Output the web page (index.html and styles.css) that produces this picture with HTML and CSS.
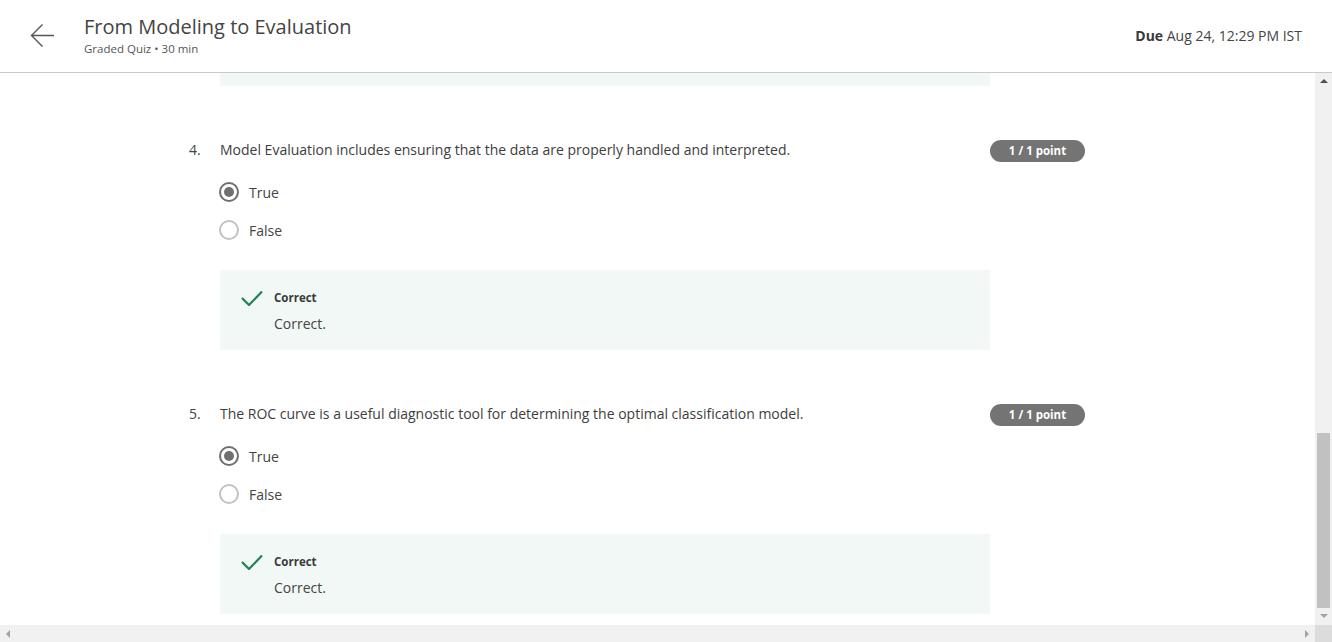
FILE: index.html
```html
<!DOCTYPE html>
<html lang="en">
<head>
<meta charset="utf-8">
<title>From Modeling to Evaluation</title>
<link rel="stylesheet" href="styles.css">
</head>
<body>
<header class="topbar">
  <div class="back">
    <svg width="26" height="26" viewBox="0 0 26 26"><path d="M25 12.5H2.5M13.5 1.5L2.5 12.5L13.5 23.5" fill="none" stroke="#555" stroke-width="1.4"/></svg>
  </div>
  <div class="titles">
    <div class="title">From Modeling to Evaluation</div>
    <div class="subtitle">Graded Quiz • 30 min</div>
  </div>
  <div class="due"><b>Due</b> Aug 24, 12:29 PM IST</div>
</header>
<div class="viewport">
  <main class="content">
    <div class="quiz">
      <div class="feedback feedback-tail"></div>

      <section class="question">
        <div class="qrow">
          <span class="qnum">4.</span>
          <span class="qtext">Model Evaluation includes ensuring that the data are properly handled and interpreted.</span>
          <span class="badge">1 / 1 point</span>
        </div>
        <div class="options">
          <div class="option"><span class="radio checked"></span><span>True</span></div>
          <div class="option"><span class="radio"></span><span>False</span></div>
        </div>
        <div class="feedback">
          <svg class="check" width="22" height="16" viewBox="0 0 22 16"><path d="M1 8L8 15L21 1.5" fill="none" stroke="#1f8354" stroke-width="2.2"/></svg>
          <div class="fbody">
            <div class="fhead">Correct</div>
            <div class="ftext">Correct.</div>
          </div>
        </div>
      </section>

      <section class="question">
        <div class="qrow">
          <span class="qnum">5.</span>
          <span class="qtext">The ROC curve is a useful diagnostic tool for determining the optimal classification model.</span>
          <span class="badge">1 / 1 point</span>
        </div>
        <div class="options">
          <div class="option"><span class="radio checked"></span><span>True</span></div>
          <div class="option"><span class="radio"></span><span>False</span></div>
        </div>
        <div class="feedback">
          <svg class="check" width="22" height="16" viewBox="0 0 22 16"><path d="M1 8L8 15L21 1.5" fill="none" stroke="#1f8354" stroke-width="2.2"/></svg>
          <div class="fbody">
            <div class="fhead">Correct</div>
            <div class="ftext">Correct.</div>
          </div>
        </div>
      </section>
    </div>
  </main>
  <div class="vscroll">
    <span class="arrow-up"></span>
    <div class="vtrack"><div class="vthumb"></div></div>
    <span class="arrow-down"></span>
  </div>
</div>
<div class="hscroll">
  <div class="htrack">
    <span class="arrow-left"></span>
    <span class="arrow-right"></span>
  </div>
  <div class="corner"></div>
</div>
</body>
</html>
```

FILE: styles.css
```css
* { box-sizing: border-box; }
html, body { margin: 0; height: 100%; }
body {
  font-family: "Open Sans", "Liberation Sans", sans-serif;
  color: #3d3d3d;
  background: #fff;
  display: flex;
  flex-direction: column;
  height: 642px;
  overflow: hidden;
}
.topbar {
  height: 73px;
  flex: none;
  border-bottom: 1px solid #c9c9c9;
  display: flex;
  align-items: flex-start;
}
.back {
  width: 84px;
  padding: 23px 0 0 29px;
}
.back svg { display: block; }
.titles { flex: 1; padding-top: 13px; }
.title { font-size: 20px; line-height: 28px; color: #444; }
.subtitle { font-size: 11.5px; line-height: 16px; color: #555; margin-top: 0; }
.due {
  padding: 25px 30px 0 0;
  font-size: 14px;
  line-height: 22px;
  color: #444;
}
.due b { font-weight: 700; color: #3a3a3a; }

.viewport { flex: 1; display: flex; min-height: 0; }
.content { flex: 1; overflow: hidden; }
.quiz { margin-left: 189px; width: 896px; }

.feedback {
  margin-left: 31px;
  width: 770px;
  height: 80px;
  background: #f2f8f6;
  display: flex;
  align-items: flex-start;
  padding: 19px 0 0 21px;
}
.feedback-tail { height: 13px; padding: 0; }
.check { display: block; margin-top: 1px; flex: none; }
.fbody { margin-left: 11px; }
.fhead { font-size: 11.5px; font-weight: 700; line-height: 18px; color: #3a3a3a; }
.ftext { font-size: 14px; line-height: 20px; margin-top: 7px; color: #444; }

.question { margin-top: 54px; }
.qrow { display: flex; align-items: center; height: 22px; }
.qnum { width: 31px; font-size: 14px; line-height: 20px; padding-bottom: 3px; color: #444; }
.qtext { width: 770px; font-size: 14px; line-height: 20px; padding-bottom: 3px; color: #3d3d3d; }
.badge {
  width: 95px;
  height: 22px;
  border-radius: 11px;
  background: #747474;
  color: #fff;
  font-size: 11.5px;
  font-weight: 700;
  line-height: 22px;
  text-align: center;
}
.options { margin: 11px 0 21px 31px; }
.option {
  height: 38px;
  display: flex;
  align-items: center;
  font-size: 14px;
  color: #444;
}
.radio {
  width: 20px;
  height: 20px;
  border-radius: 50%;
  border: 2px solid #c2c2c2;
  margin-right: 10px;
  margin-left: -1px;
  display: flex;
  align-items: center;
  justify-content: center;
}
.radio.checked { border-color: #6f6f6f; }
.radio.checked::after {
  content: "";
  width: 10px;
  height: 10px;
  border-radius: 50%;
  background: #6f6f6f;
}

.vscroll {
  width: 17px;
  flex: none;
  background: #f1f1f1;
  display: flex;
  flex-direction: column;
  align-items: center;
}
.vtrack { flex: 1; width: 100%; display: flex; flex-direction: column; }
.vthumb {
  margin: auto 2px 2px 2px;
  height: 175px;
  background: #c1c1c1;
}
.arrow-up, .arrow-down, .arrow-left, .arrow-right { display: block; width: 0; height: 0; flex: none; }
.arrow-up {
  margin: 6px 0 5px;
  border-left: 4px solid transparent;
  border-right: 4px solid transparent;
  border-bottom: 4px solid #505050;
}
.arrow-down {
  margin: 4px 0 7px;
  border-left: 4px solid transparent;
  border-right: 4px solid transparent;
  border-top: 4px solid #a3a3a3;
}
.hscroll { height: 17px; flex: none; display: flex; }
.htrack {
  flex: 1;
  background: #f1f1f1;
  display: flex;
  align-items: center;
  justify-content: space-between;
  padding: 0 6px;
}
.arrow-left {
  border-top: 4px solid transparent;
  border-bottom: 4px solid transparent;
  border-right: 4px solid #a3a3a3;
}
.arrow-right {
  border-top: 4px solid transparent;
  border-bottom: 4px solid transparent;
  border-left: 4px solid #a3a3a3;
}
.corner { width: 17px; background: #dcdcdc; }
```
